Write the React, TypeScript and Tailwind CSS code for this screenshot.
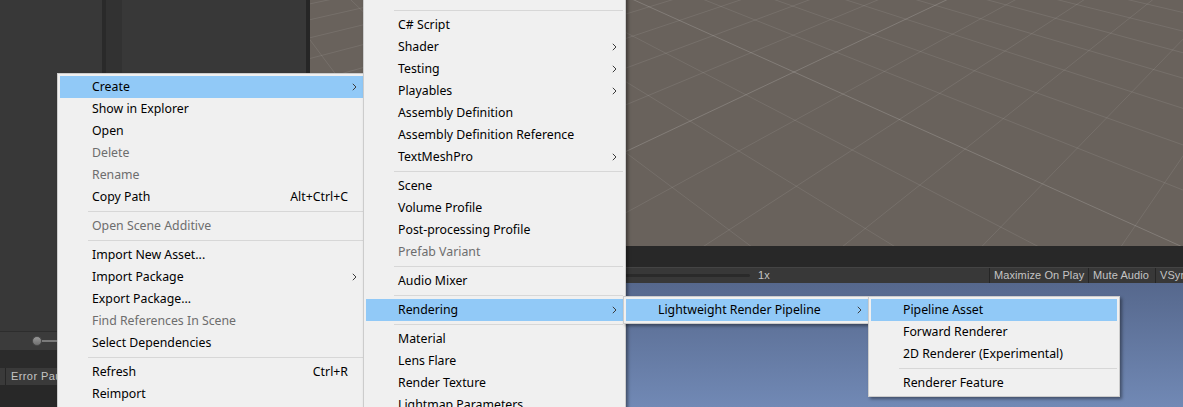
import React from 'react';

type Item = { label?: string; shortcut?: string; sub?: boolean; disabled?: boolean; active?: boolean; sep?: boolean };

const assetsMenu: Item[] = [
  { label: 'Create', sub: true, active: true },
  { label: 'Show in Explorer' },
  { label: 'Open' },
  { label: 'Delete', disabled: true },
  { label: 'Rename', disabled: true },
  { label: 'Copy Path', shortcut: 'Alt+Ctrl+C' },
  { sep: true },
  { label: 'Open Scene Additive', disabled: true },
  { sep: true },
  { label: 'Import New Asset...' },
  { label: 'Import Package', sub: true },
  { label: 'Export Package...' },
  { label: 'Find References In Scene', disabled: true },
  { label: 'Select Dependencies' },
  { sep: true },
  { label: 'Refresh', shortcut: 'Ctrl+R' },
  { label: 'Reimport' },
  { label: 'Reimport All' },
];

const createMenu: Item[] = [
  { label: 'Folder' },
  { sep: true },
  { label: 'C# Script' },
  { label: 'Shader', sub: true },
  { label: 'Testing', sub: true },
  { label: 'Playables', sub: true },
  { label: 'Assembly Definition' },
  { label: 'Assembly Definition Reference' },
  { label: 'TextMeshPro', sub: true },
  { sep: true },
  { label: 'Scene' },
  { label: 'Volume Profile' },
  { label: 'Post-processing Profile' },
  { label: 'Prefab Variant', disabled: true },
  { sep: true },
  { label: 'Audio Mixer' },
  { sep: true },
  { label: 'Rendering', sub: true, active: true },
  { sep: true },
  { label: 'Material' },
  { label: 'Lens Flare' },
  { label: 'Render Texture' },
  { label: 'Lightmap Parameters' },
];

const renderingMenu: Item[] = [{ label: 'Lightweight Render Pipeline', sub: true, active: true }];

const lwrpMenu: Item[] = [
  { label: 'Pipeline Asset', active: true },
  { label: 'Forward Renderer' },
  { label: '2D Renderer (Experimental)' },
  { sep: true },
  { label: 'Renderer Feature' },
];

function Chevron() {
  return (
    <svg width="5" height="8" viewBox="0 0 5 8" className="shrink-0">
      <path d="M0.8 0.8 L4 4 L0.8 7.2" fill="none" stroke="#3c3c3c" strokeWidth="1" />
    </svg>
  );
}

function Menu({ items, className }: { items: Item[]; className: string }) {
  return (
    <div className={`absolute border border-[#cccccc] bg-[#f0f0f0] p-[2px] shadow-[2px_2px_3px_rgba(0,0,0,0.4)] ${className}`}>
      {items.map((it, i) =>
        it.sep ? (
          <div key={i} className="h-[7px] pl-[28px] pt-[3px]">
            <div className="h-px bg-[#d7d7d7]" />
          </div>
        ) : (
          <div
            key={i}
            className={`flex h-[22px] items-center pl-[32px] pr-[6px] ${it.active ? 'bg-[#91c9f7]' : ''} ${it.disabled ? 'text-[#6d6d6d]' : 'text-black'}`}
          >
            <span className="flex-1 whitespace-nowrap">{it.label}</span>
            {it.shortcut && <span className="mr-[9px] whitespace-nowrap">{it.shortcut}</span>}
            {it.sub && <Chevron />}
          </div>
        )
      )}
    </div>
  );
}

function SceneGrid() {
  const W = 873;
  const H = 246;
  const offX = 310;
  const va = [101 - offX, -240];
  const vb = [1454 - offX, -240];
  const o = [794 - offX, 72];
  const a = 0.066;
  const b = 0.068;
  const proj = (u: number, v: number) => {
    const w = a * u + b * v + 1;
    return [(a * u * va[0] + b * v * vb[0] + o[0]) / w, (a * u * va[1] + b * v * vb[1] + o[1]) / w];
  };
  const lines: React.ReactNode[] = [];
  for (let i = -70; i <= 70; i++) {
    const stroke = i % 10 === 0 ? 'rgba(255,255,255,0.17)' : 'rgba(255,255,255,0.085)';
    const vMin = Math.max((0.05 - 1 - a * i) / b, -400);
    if (vMin < 300) {
      const [x1, y1] = proj(i, vMin);
      const [x2, y2] = proj(i, 300);
      lines.push(<line key={`u${i}`} x1={x1} y1={y1} x2={x2} y2={y2} stroke={stroke} strokeWidth="1" />);
    }
    const uMin = Math.max((0.05 - 1 - b * i) / a, -400);
    if (uMin < 300) {
      const [x1, y1] = proj(uMin, i);
      const [x2, y2] = proj(300, i);
      lines.push(<line key={`v${i}`} x1={x1} y1={y1} x2={x2} y2={y2} stroke={stroke} strokeWidth="1" />);
    }
  }
  return (
    <svg width={W} height={H} className="block">
      {lines}
    </svg>
  );
}

export default function App() {
  return (
    <div className="relative h-[407px] w-[1183px] overflow-hidden bg-[#282828] font-['Noto_Sans',sans-serif] text-[12.3px]">
      <div className="flex h-full">
        {/* project + console panels */}
        <div className="flex w-[306px] shrink-0 flex-col">
          <div className="flex h-[331px]">
            <div className="w-[102px] bg-[#383838]" />
            <div className="w-[4px] bg-[#2a2a2a]" />
            <div className="w-[16px] bg-[#323232]" />
            <div className="flex-1 bg-[#383838]" />
          </div>
          <div className="flex h-[19px] items-center border-t border-[#2d2d2d] bg-[#3b3b3b] pl-[32px]">
            <div className="h-[10px] w-[10px] rounded-full border border-[#4a4a4a] bg-gradient-to-b from-[#999999] to-[#6f6f6f]" />
            <div className="h-[2px] flex-1 bg-[#7a7a7a]" />
          </div>
          <div className="h-[18px] bg-[#2b2b2b]" />
          <div className="flex h-[17px] items-center bg-[#3a3a3a] font-['Liberation_Sans',sans-serif] text-[11px] tracking-[0.4px] text-[#c4c4c4]">
            <div className="w-[5px]" />
            <div className="flex h-full items-center border-l border-[#262626] pl-[5px]">Error Pause</div>
          </div>
          <div className="flex-1 bg-[#282828]" />
        </div>
        <div className="w-[4px] shrink-0 bg-[#262626]" />
        {/* scene + game views */}
        <div className="flex min-w-0 flex-1 flex-col">
          <div className="h-[246px] overflow-hidden bg-[#69625c]">
            <SceneGrid />
          </div>
          <div className="h-[21px] bg-[#282828]" />
          <div className="flex h-[16px] items-center overflow-hidden border-t border-[#444444] bg-[#383838] font-['Liberation_Sans',sans-serif] text-[11px] tracking-[0.1px] text-[#c4c4c4]">
            <div className="flex w-[679px] shrink-0 items-center">
              <div className="ml-[200px] h-[3px] w-[240px] rounded-full bg-[#2a2a2a]" />
              <span className="ml-[8px]">1x</span>
            </div>
            <div className="flex h-full w-[99px] shrink-0 items-center border-l border-[#252525] pl-[4px] whitespace-nowrap">Maximize On Play</div>
            <div className="flex h-full w-[67px] shrink-0 items-center border-l border-[#252525] pl-[4px] whitespace-nowrap">Mute Audio</div>
            <div className="flex h-full w-[60px] shrink-0 items-center border-l border-[#252525] pl-[4px] whitespace-nowrap">VSync</div>
          </div>
          <div className="flex-1 bg-gradient-to-b from-[#56688d] to-[#7189b5]" />
        </div>
      </div>

      <Menu items={assetsMenu} className="left-[57px] top-[73px] z-10 w-[309px]" />
      <Menu items={createMenu} className="left-[363px] top-[-18px] z-20 w-[263px]" />
      <Menu items={renderingMenu} className="left-[623px] top-[296px] z-30 w-[248px]" />
      <Menu items={lwrpMenu} className="left-[868px] top-[296px] z-40 w-[252px]" />
    </div>
  );
}
